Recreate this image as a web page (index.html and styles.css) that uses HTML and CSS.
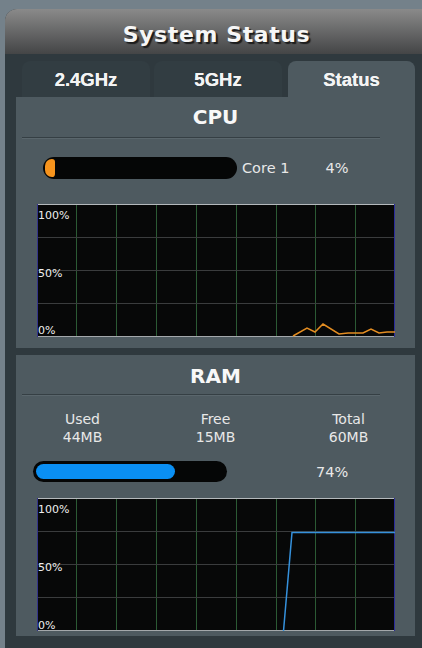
FILE: index.html
```html
<html>

<head>
    <link rel="stylesheet" href="styles.css">
</head>

<body>
    <div class="frame">
        <div class="header">
            <h1>System Status</h1>
        </div>
        <nav class="tabs">
            <div class="tab">2.4GHz</div>
            <div class="tab">5GHz</div>
            <div class="tab active">Status</div>
        </nav>

        <section class="panel cpu">
            <h2>CPU</h2>
            <hr>
            <div class="core-row">
                <div class="bar cpu-bar">
                    <div class="fill" style="width: 4%;"></div>
                </div>
                <span class="core-name">Core 1</span>
                <span class="core-pct">4%</span>
            </div>
            <svg class="graph" width="358" height="133" viewBox="0 0 358 133">
                <rect x="0" y="0" width="358" height="133" fill="#070808" />
                <g stroke="#2b5a34" stroke-width="1">
                    <line x1="39.5" y1="1" x2="39.5" y2="132" />
                    <line x1="79.5" y1="1" x2="79.5" y2="132" />
                    <line x1="119.5" y1="1" x2="119.5" y2="132" />
                    <line x1="159.5" y1="1" x2="159.5" y2="132" />
                    <line x1="199.5" y1="1" x2="199.5" y2="132" />
                    <line x1="239.5" y1="1" x2="239.5" y2="132" />
                    <line x1="278.5" y1="1" x2="278.5" y2="132" />
                    <line x1="318.5" y1="1" x2="318.5" y2="132" />
                </g>
                <g stroke="#3a3c3d" stroke-width="1">
                    <line x1="0" y1="33.5" x2="358" y2="33.5" />
                    <line x1="0" y1="66.5" x2="358" y2="66.5" />
                    <line x1="0" y1="99.5" x2="358" y2="99.5" />
                </g>
                <line x1="0" y1="0.5" x2="358" y2="0.5" stroke="#b4b9bc" />
                <line x1="0" y1="132.5" x2="358" y2="132.5" stroke="#a3a8ab" />
                <line x1="0.5" y1="0" x2="0.5" y2="133" stroke="#34348a" />
                <line x1="357.5" y1="0" x2="357.5" y2="133" stroke="#2c2c9a" />
                <polyline fill="none" stroke="#e38d22" stroke-width="1.5"
                    points="256,132 270,124 278,128 286,120 302,130 311,129 326,129 334,125 342,129 350,128 358,128" />
                <g class="axis">
                    <text x="1" y="15">100%</text>
                    <text x="1" y="73">50%</text>
                    <text x="1" y="130">0%</text>
                </g>
            </svg>
        </section>

        <section class="panel ram">
            <h2>RAM</h2>
            <hr>
            <div class="mem-info">
                <div>Used<br>44MB</div>
                <div>Free<br>15MB</div>
                <div>Total<br>60MB</div>
            </div>
            <div class="mem-row">
                <div class="bar ram-bar">
                    <div class="fill" style="width: 74%;"></div>
                </div>
                <span class="mem-pct">74%</span>
            </div>
            <svg class="graph" width="358" height="133" viewBox="0 0 358 133">
                <rect x="0" y="0" width="358" height="133" fill="#070808" />
                <g stroke="#2b5a34" stroke-width="1">
                    <line x1="39.5" y1="1" x2="39.5" y2="132" />
                    <line x1="79.5" y1="1" x2="79.5" y2="132" />
                    <line x1="119.5" y1="1" x2="119.5" y2="132" />
                    <line x1="159.5" y1="1" x2="159.5" y2="132" />
                    <line x1="199.5" y1="1" x2="199.5" y2="132" />
                    <line x1="239.5" y1="1" x2="239.5" y2="132" />
                    <line x1="278.5" y1="1" x2="278.5" y2="132" />
                    <line x1="318.5" y1="1" x2="318.5" y2="132" />
                </g>
                <g stroke="#3a3c3d" stroke-width="1">
                    <line x1="0" y1="33.5" x2="358" y2="33.5" />
                    <line x1="0" y1="66.5" x2="358" y2="66.5" />
                    <line x1="0" y1="99.5" x2="358" y2="99.5" />
                </g>
                <line x1="0" y1="0.5" x2="358" y2="0.5" stroke="#b4b9bc" />
                <line x1="0" y1="132.5" x2="358" y2="132.5" stroke="#a3a8ab" />
                <line x1="0.5" y1="0" x2="0.5" y2="133" stroke="#34348a" />
                <line x1="357.5" y1="0" x2="357.5" y2="133" stroke="#2c2c9a" />
                <polyline fill="none" stroke="#3591dc" stroke-width="1.5"
                    points="246.5,133 255,34.5 358,34.5" />
                <g class="axis">
                    <text x="1" y="15">100%</text>
                    <text x="1" y="73">50%</text>
                    <text x="1" y="131">0%</text>
                </g>
            </svg>
        </section>
    </div>
</body>

</html>
```

FILE: styles.css
```css
html {
    background-color: #74818a;
}

body {
    margin: 0;
    font-family: 'DejaVu Sans', Verdana, sans-serif;
    color: #e8e8e8;
}

.frame {
    margin: 9px 0 0 5px;
    background: #2f393e;
    border-radius: 12px 0 0 0;
    height: 639px;
    overflow: hidden;
}

.header {
    height: 45px;
    box-sizing: border-box;
    padding-top: 6px;
    background: linear-gradient(#8a8a8a, #444546);
    display: flex;
    align-items: center;
    justify-content: center;
}

.header h1 {
    margin: 0;
    padding-left: 6px;
    font-size: 22px;
    font-weight: bold;
    letter-spacing: 0.6px;
    color: #f6f6f6;
    text-shadow: 2px 2px 1px #1c1c1c;
}

.tabs {
    display: flex;
    padding: 7px 0 0 17px;
}

.tab {
    width: 128px;
    height: 36px;
    line-height: 38px;
    margin-right: 4px;
    text-align: center;
    background: #323d42;
    border-radius: 8px 8px 0 0;
    font-family: 'Liberation Sans', Arial, sans-serif;
    font-weight: bold;
    font-size: 18.5px;
    color: #f4f4f4;
    text-shadow: 0 0 0.6px #f4f4f4;
}

.tab:nth-child(2) {
    margin-right: 6px;
}

.tab.active {
    width: 127px;
    background: #4e5a60;
}

.panel {
    margin-left: 11px;
    width: 399px;
    background: #4e5a60;
}

.panel h2 {
    margin: 0;
    text-align: center;
    font-size: 20px;
    line-height: 24px;
    font-weight: bold;
    color: #f8f8f8;
}

.panel hr {
    width: 358px;
    margin: 8px 0 0 6px;
    border: none;
    border-top: 1px solid #353f44;
    border-bottom: 1px solid #5a666c;
    height: 0;
}

.cpu {
    padding-top: 8px;
    height: 243px;
}

.core-row {
    display: flex;
    align-items: center;
    margin-top: 18px;
    padding-left: 27px;
    font-size: 14.5px;
}

.bar {
    background: #050606;
    border-radius: 11px;
    box-sizing: border-box;
}

.cpu-bar {
    width: 194px;
    height: 22px;
    padding: 2px 2px;
}

.cpu-bar .fill {
    height: 18px;
    min-width: 10px;
    background: #f7941d;
    border-radius: 9px 4px 4px 9px;
}

.core-name {
    margin-left: 5px;
}

.core-pct {
    margin-left: 36px;
}

.graph {
    display: block;
    margin: 25px 0 0 21px;
}

.axis text {
    font-family: 'DejaVu Sans', sans-serif;
    font-size: 11px;
    fill: #eeeeee;
}

.ram {
    margin-top: 7px;
    padding-top: 9px;
    height: 272px;
}

.ram hr {
    margin-top: 6px;
}

.mem-info {
    display: grid;
    grid-template-columns: 133px 133px 133px;
    margin-top: 14px;
    text-align: center;
    font-size: 14px;
    line-height: 18px;
}

.mem-row {
    display: flex;
    align-items: center;
    margin-top: 15px;
    font-size: 14.5px;
}

.ram-bar {
    width: 194px;
    height: 21px;
    margin-left: 17px;
    padding: 3px;
}

.ram-bar .fill {
    height: 15px;
    background: #0a8ff3;
    border-radius: 8px;
}

.mem-pct {
    margin-left: 89px;
}

.ram .graph {
    margin-top: 16px;
}
```
